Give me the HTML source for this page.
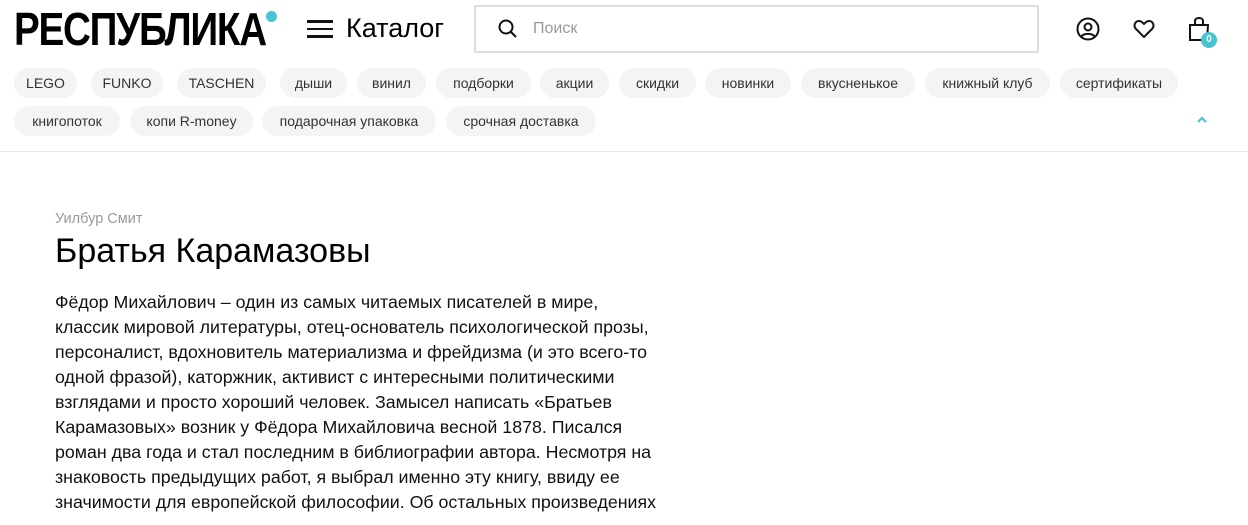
<!DOCTYPE html>
<html><head><meta charset="utf-8"><style>
*{margin:0;padding:0;box-sizing:border-box}
body{width:1248px;height:525px;overflow:hidden;background:#fff;font-family:"Liberation Sans",sans-serif;color:#000;position:relative}
.logo{position:absolute;left:14px;top:6px;font-size:46px;font-weight:bold;letter-spacing:-1.5px;transform:scaleX(0.84);transform-origin:left;line-height:46px;white-space:nowrap}
.dot{position:absolute;left:266px;top:11px;width:11px;height:11px;border-radius:50%;background:#45c4d6}
.ham{position:absolute;left:307px;top:20px;width:26px}
.ham i{display:block;height:2.5px;background:#111;margin-bottom:5px}
.cat{position:absolute;left:346px;top:13px;font-size:27px;line-height:30px}
.search{position:absolute;left:474px;top:5px;width:565px;height:48px;border:2px solid #ddd;border-radius:2px}
.search span{position:absolute;left:57px;top:13px;font-size:16px;color:#999}
.tag{position:absolute;height:30px;line-height:30px;border-radius:15px;background:#f4f4f4;font-size:14px;color:#333;text-align:center}
.hr{position:absolute;left:0;top:151px;width:1248px;height:1px;background:#e6e6e6}
.auth{position:absolute;left:55px;top:211px;font-size:14.5px;color:#999}
h1{position:absolute;left:55px;top:231px;font-size:34px;font-weight:normal;line-height:40px}
.body{position:absolute;left:55px;top:290px;font-size:17.8px;line-height:25px;color:#111;white-space:nowrap}
</style></head><body>
<div class="logo">РЕСПУБЛИКА</div><div class="dot"></div>
<div class="ham"><i></i><i></i><i></i></div>
<div class="cat">Каталог</div>
<div class="search">
<svg style="position:absolute;left:22px;top:12px" width="20" height="20" viewBox="0 0 20 20"><circle cx="8" cy="8" r="6.5" fill="none" stroke="#111" stroke-width="2"/><path d="M13 13l5 5" stroke="#111" stroke-width="2"/></svg>
<span>Поиск</span></div>
<svg style="position:absolute;left:1076px;top:17px" width="24" height="24" viewBox="0 0 24 24"><circle cx="12" cy="12" r="10.5" fill="none" stroke="#111" stroke-width="2"/><circle cx="12" cy="10" r="3.5" fill="none" stroke="#111" stroke-width="2"/><path d="M5.5 19.5c2-3.5 11-3.5 13 0" fill="none" stroke="#111" stroke-width="2"/></svg>
<svg style="position:absolute;left:1133px;top:19px" width="22" height="20" viewBox="0 0 22 20"><path d="M11 18L3 10C0 7 2 2 6 2c2.5 0 4 2 5 3 1-1 2.5-3 5-3 4 0 6 5 3 8z" fill="none" stroke="#111" stroke-width="2" stroke-linejoin="round"/></svg>
<svg style="position:absolute;left:1188px;top:16px" width="24" height="26" viewBox="0 0 24 26"><path d="M2 9h18l-1 15H2z" fill="none" stroke="#111" stroke-width="2"/><path d="M7 9V5c0-4 8-4 8 0v4" fill="none" stroke="#111" stroke-width="2"/></svg>
<div style="position:absolute;left:1201px;top:32px;width:16px;height:16px;border-radius:50%;background:#45c4d6;color:#fff;font-size:10px;font-weight:bold;text-align:center;line-height:16px">0</div>
<div class="tag" style="left:14px;top:68px;width:63px">LEGO</div>
<div class="tag" style="left:91px;top:68px;width:72px">FUNKO</div>
<div class="tag" style="left:177px;top:68px;width:89px">TASCHEN</div>
<div class="tag" style="left:280px;top:68px;width:67px">дыши</div>
<div class="tag" style="left:357px;top:68px;width:69px">винил</div>
<div class="tag" style="left:436px;top:68px;width:95px">подборки</div>
<div class="tag" style="left:540px;top:68px;width:69px">акции</div>
<div class="tag" style="left:619px;top:68px;width:77px">скидки</div>
<div class="tag" style="left:705px;top:68px;width:86px">новинки</div>
<div class="tag" style="left:801px;top:68px;width:114px">вкусненькое</div>
<div class="tag" style="left:925px;top:68px;width:125px">книжный клуб</div>
<div class="tag" style="left:1060px;top:68px;width:118px">сертификаты</div>
<div class="tag" style="left:14px;top:106px;width:106px">книгопоток</div>
<div class="tag" style="left:130px;top:106px;width:123px">копи R-money</div>
<div class="tag" style="left:262px;top:106px;width:174px">подарочная упаковка</div>
<div class="tag" style="left:446px;top:106px;width:150px">срочная доставка</div>
<svg style="position:absolute;left:1196px;top:116px" width="12" height="8" viewBox="0 0 12 8"><path d="M2 6l4-4 4 4" fill="none" stroke="#45c4d6" stroke-width="2.2"/></svg>
<div class="hr"></div>
<div class="auth">Уилбур Смит</div>
<h1>Братья Карамазовы</h1>
<div class="body">Фёдор Михайлович – один из самых читаемых писателей в мире,<br>классик мировой литературы, отец-основатель психологической прозы,<br>персоналист, вдохновитель материализма и фрейдизма (и это всего-то<br>одной фразой), каторжник, активист с интересными политическими<br>взглядами и просто хороший человек. Замысел написать «Братьев<br>Карамазовых» возник у Фёдора Михайловича весной 1878. Писался<br>роман два года и стал последним в библиографии автора. Несмотря на<br>знаковость предыдущих работ, я выбрал именно эту книгу, ввиду ее<br>значимости для европейской философии. Об остальных произведениях</div>
</body></html>
